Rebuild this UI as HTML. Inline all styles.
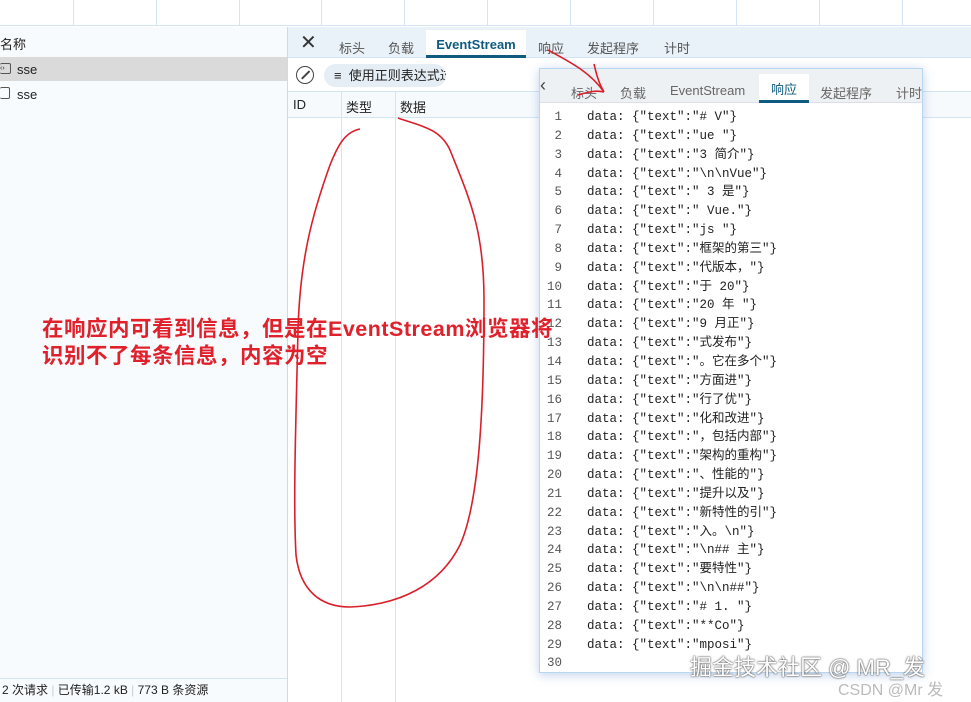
<!DOCTYPE html>
<html><head><meta charset="utf-8"><style>
*{margin:0;padding:0;box-sizing:border-box}
body{width:971px;height:702px;overflow:hidden;background:#fff;font-family:"Liberation Sans","Noto Sans CJK SC",sans-serif;font-size:13px;color:#222;position:relative}
.a{position:absolute}
.vl{position:absolute;width:1px;background:#d3e5f5}
.hl{position:absolute;height:1px;background:#d3e5f5}
.code div{height:18.85px;line-height:18.85px;white-space:pre;font-family:"Liberation Mono","Noto Sans CJK SC",monospace;font-size:12.5px}
.ln{position:absolute;left:0;width:22px;text-align:right;color:#555}
</style></head><body>
<div class="a" style="left:0;top:0;width:971px;height:26px;background:#fff;border-bottom:1px solid #d3e5f5"></div>
<div class="vl" style="left:73px;top:0;height:26px"></div>
<div class="vl" style="left:156px;top:0;height:26px"></div>
<div class="vl" style="left:239px;top:0;height:26px"></div>
<div class="vl" style="left:321px;top:0;height:26px"></div>
<div class="vl" style="left:404px;top:0;height:26px"></div>
<div class="vl" style="left:487px;top:0;height:26px"></div>
<div class="vl" style="left:570px;top:0;height:26px"></div>
<div class="vl" style="left:653px;top:0;height:26px"></div>
<div class="vl" style="left:736px;top:0;height:26px"></div>
<div class="vl" style="left:819px;top:0;height:26px"></div>
<div class="vl" style="left:902px;top:0;height:26px"></div>
<div class="a" style="left:0;top:27px;width:287px;height:675px;background:#f8fbfe"></div>
<div class="a" style="left:0;top:34px;font-size:13px">名称</div>
<div class="a" style="left:0;top:57px;width:287px;height:24px;background:#dadada"></div>
<div class="a" style="left:0;top:63px;width:11px;height:11px;border:1px solid #555;border-left:none;border-radius:2px;font-size:7px;line-height:9px">‹›</div>
<div class="a" style="left:17px;top:62px">sse</div>
<div class="a" style="left:0;top:87px;width:10px;height:12px;border:1px solid #555;border-left:none;border-radius:2px"></div>
<div class="a" style="left:17px;top:87px">sse</div>
<div class="a" style="left:0;top:678px;width:287px;height:24px;border-top:1px solid #d3e5f5;font-size:12px;line-height:22px;white-space:nowrap;padding-left:2px">2 次请求 <span style="color:#ccc">|</span> 已传输1.2 kB <span style="color:#ccc">|</span> 773 B 条资源</div>
<div class="vl" style="left:287px;top:27px;height:675px;background:#c9dcec"></div>
<div class="a" style="left:288px;top:27px;width:683px;height:31px;background:#eaf2f9;border-bottom:1px solid #d3e5f5"></div>
<div class="a" style="left:300px;top:30px;font-size:20px;color:#333;font-weight:300">✕</div>
<div class="a" style="left:339px;top:38px;color:#555">标头</div>
<div class="a" style="left:388px;top:38px;color:#555">负载</div>
<div class="a" style="left:426px;top:30px;width:100px;height:28px;background:#fff;border-bottom:3px solid #0f5b80;text-align:center;line-height:30px;color:#0f5b80;font-weight:bold">EventStream</div>
<div class="a" style="left:538px;top:38px;color:#555">响应</div>
<div class="a" style="left:587px;top:38px;color:#555">发起程序</div>
<div class="a" style="left:664px;top:38px;color:#555">计时</div>
<div class="a" style="left:296px;top:66px;width:18px;height:18px;border:1.5px solid #444;border-radius:50%"></div>
<div class="a" style="left:300px;top:74px;width:11px;height:1.5px;background:#444;transform:rotate(-45deg)"></div>
<div class="a" style="left:324px;top:64px;width:122px;height:23px;background:#e6eef5;border-radius:12px;line-height:23px;padding-left:10px;white-space:nowrap;overflow:hidden">≡&nbsp; 使用正则表达式过</div>
<div class="a" style="left:288px;top:91px;width:683px;height:27px;background:#f7fafd;border-top:1px solid #d3e5f5;border-bottom:1px solid #d3e5f5"></div>
<div class="a" style="left:293px;top:97px">ID</div>
<div class="a" style="left:346px;top:97px">类型</div>
<div class="a" style="left:400px;top:97px">数据</div>
<div class="vl" style="left:341px;top:91px;height:611px"></div>
<div class="vl" style="left:395px;top:91px;height:611px"></div>
<div class="a" style="left:539px;top:68px;width:384px;height:605px;background:#fff;border:1px solid #b9d6f0;box-shadow:0 2px 10px rgba(80,130,200,.35)">
 <div class="a" style="left:0;top:0;width:382px;height:34px;background:#eef1f4;border-bottom:1px solid #dde"></div>
 <div class="a" style="left:0;top:6px;font-size:18px;color:#444">‹</div>
 <div class="a" style="left:31px;top:14px;color:#666">标头</div>
 <div class="a" style="left:80px;top:14px;color:#666">负载</div>
 <div class="a" style="left:130px;top:14px;color:#666">EventStream</div>
 <div class="a" style="left:219px;top:5px;width:50px;height:29px;background:#fff;border-bottom:3px solid #0f5b80;text-align:center;line-height:32px;color:#0f5b80">响应</div>
 <div class="a" style="left:280px;top:14px;color:#666">发起程序</div>
 <div class="a" style="left:356px;top:14px;color:#666">计时</div>
 <div class="a code" style="left:0;top:39px;width:380px">
  <div><span class="ln">1</span><span style="margin-left:47px">data: {"text":"# V"}</span></div>
  <div><span class="ln">2</span><span style="margin-left:47px">data: {"text":"ue "}</span></div>
  <div><span class="ln">3</span><span style="margin-left:47px">data: {"text":"3 简介"}</span></div>
  <div><span class="ln">4</span><span style="margin-left:47px">data: {"text":"\n\nVue"}</span></div>
  <div><span class="ln">5</span><span style="margin-left:47px">data: {"text":" 3 是"}</span></div>
  <div><span class="ln">6</span><span style="margin-left:47px">data: {"text":" Vue."}</span></div>
  <div><span class="ln">7</span><span style="margin-left:47px">data: {"text":"js "}</span></div>
  <div><span class="ln">8</span><span style="margin-left:47px">data: {"text":"框架的第三"}</span></div>
  <div><span class="ln">9</span><span style="margin-left:47px">data: {"text":"代版本，"}</span></div>
  <div><span class="ln">10</span><span style="margin-left:47px">data: {"text":"于 20"}</span></div>
  <div><span class="ln">11</span><span style="margin-left:47px">data: {"text":"20 年 "}</span></div>
  <div><span class="ln">12</span><span style="margin-left:47px">data: {"text":"9 月正"}</span></div>
  <div><span class="ln">13</span><span style="margin-left:47px">data: {"text":"式发布"}</span></div>
  <div><span class="ln">14</span><span style="margin-left:47px">data: {"text":"。它在多个"}</span></div>
  <div><span class="ln">15</span><span style="margin-left:47px">data: {"text":"方面进"}</span></div>
  <div><span class="ln">16</span><span style="margin-left:47px">data: {"text":"行了优"}</span></div>
  <div><span class="ln">17</span><span style="margin-left:47px">data: {"text":"化和改进"}</span></div>
  <div><span class="ln">18</span><span style="margin-left:47px">data: {"text":"，包括内部"}</span></div>
  <div><span class="ln">19</span><span style="margin-left:47px">data: {"text":"架构的重构"}</span></div>
  <div><span class="ln">20</span><span style="margin-left:47px">data: {"text":"、性能的"}</span></div>
  <div><span class="ln">21</span><span style="margin-left:47px">data: {"text":"提升以及"}</span></div>
  <div><span class="ln">22</span><span style="margin-left:47px">data: {"text":"新特性的引"}</span></div>
  <div><span class="ln">23</span><span style="margin-left:47px">data: {"text":"入。\n"}</span></div>
  <div><span class="ln">24</span><span style="margin-left:47px">data: {"text":"\n## 主"}</span></div>
  <div><span class="ln">25</span><span style="margin-left:47px">data: {"text":"要特性"}</span></div>
  <div><span class="ln">26</span><span style="margin-left:47px">data: {"text":"\n\n##"}</span></div>
  <div><span class="ln">27</span><span style="margin-left:47px">data: {"text":"# 1. "}</span></div>
  <div><span class="ln">28</span><span style="margin-left:47px">data: {"text":"**Co"}</span></div>
  <div><span class="ln">29</span><span style="margin-left:47px">data: {"text":"mposi"}</span></div>
  <div><span class="ln">30</span></div>
 </div>
</div>
<div class="a" style="left:42px;top:316px;color:#e0202a;font-weight:bold;font-size:21.5px;line-height:27px;white-space:nowrap;letter-spacing:0.5px;z-index:5">在响应内可看到信息，但是在EventStream浏览器将<br>识别不了每条信息，内容为空</div>
<svg class="a" style="left:0;top:0;z-index:4" width="971" height="702">
 <path d="M360 129 C345 132 338 145 330 165 C312 215 300 260 298 330 C296 420 293 500 296 555 C300 590 320 607 350 607 C400 605 440 585 460 545 C478 505 484 420 484 300 C484 230 470 200 450 150 C440 128 420 126 398 118" fill="none" stroke="#d8202a" stroke-width="1.6"/>
 <path d="M548 50 C570 62 590 72 604 92 M604 92 C598 82 596 72 594 64 M604 92 C596 90 588 92 578 95" fill="none" stroke="#d8202a" stroke-width="1.6"/>
</svg>
<div class="a" style="left:690px;top:650px;font-size:22px;color:#fff;text-shadow:0 0 2px #555,0 0 1px #333;white-space:nowrap;z-index:6">掘金技术社区 @ MR_发</div>
<div class="a" style="left:838px;top:676px;font-size:16px;color:#bbb;white-space:nowrap;z-index:6">CSDN @Mr 发</div>
</body></html>
